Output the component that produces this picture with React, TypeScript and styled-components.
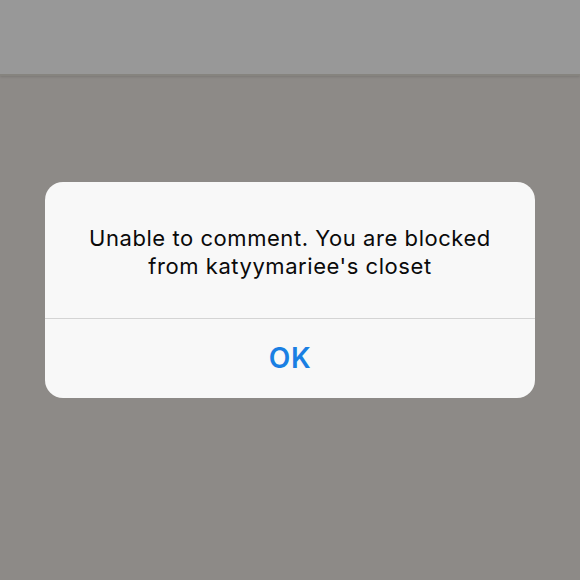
import React from "react";
import styled, { createGlobalStyle } from "styled-components";

const Global = createGlobalStyle`
  html, body { margin: 0; padding: 0; }
  body { width: 580px; height: 580px; overflow: hidden; font-family: Inter, "Noto Sans", sans-serif; }
`;

const Screen = styled.div`
  width: 580px;
  height: 580px;
  display: flex;
  flex-direction: column;
  background: #8d8a87;
`;

const TopBar = styled.div`
  height: 74px;
  background: #989898;
  border-bottom: 2px solid #86847f;
  box-shadow: 0 1px 2px rgba(0,0,0,0.12);
`;

const Backdrop = styled.div`
  flex: 1;
  display: flex;
  justify-content: center;
  padding-top: 106px;
`;

const Alert = styled.div`
  width: 490px;
  height: 216px;
  background: #f8f8f8;
  border-radius: 18px;
  display: flex;
  flex-direction: column;
  overflow: hidden;
`;

const Message = styled.div`
  height: 136px;
  box-sizing: border-box;
  padding-top: 42px;
  text-align: center;
  font-size: 22px;
  line-height: 28px;
  color: #0a0a0a;
  letter-spacing: 0.55px;
`;

const Divider = styled.div`
  height: 1px;
  background: #d4d4d4;
`;

const Button = styled.div`
  flex: 1;
  display: flex;
  align-items: center;
  justify-content: center;
  color: #1a7fe3;
  font-size: 28px;
  font-weight: 600;
  letter-spacing: 0.6px;
  padding-bottom: 2px;
`;

export default function App() {
  return (
    <>
      <Global />
      <Screen>
        <TopBar />
        <Backdrop>
          <Alert>
            <Message>
              Unable to comment. You are blocked
              <br />
              from katyymariee's closet
            </Message>
            <Divider />
            <Button>OK</Button>
          </Alert>
        </Backdrop>
      </Screen>
    </>
  );
}
